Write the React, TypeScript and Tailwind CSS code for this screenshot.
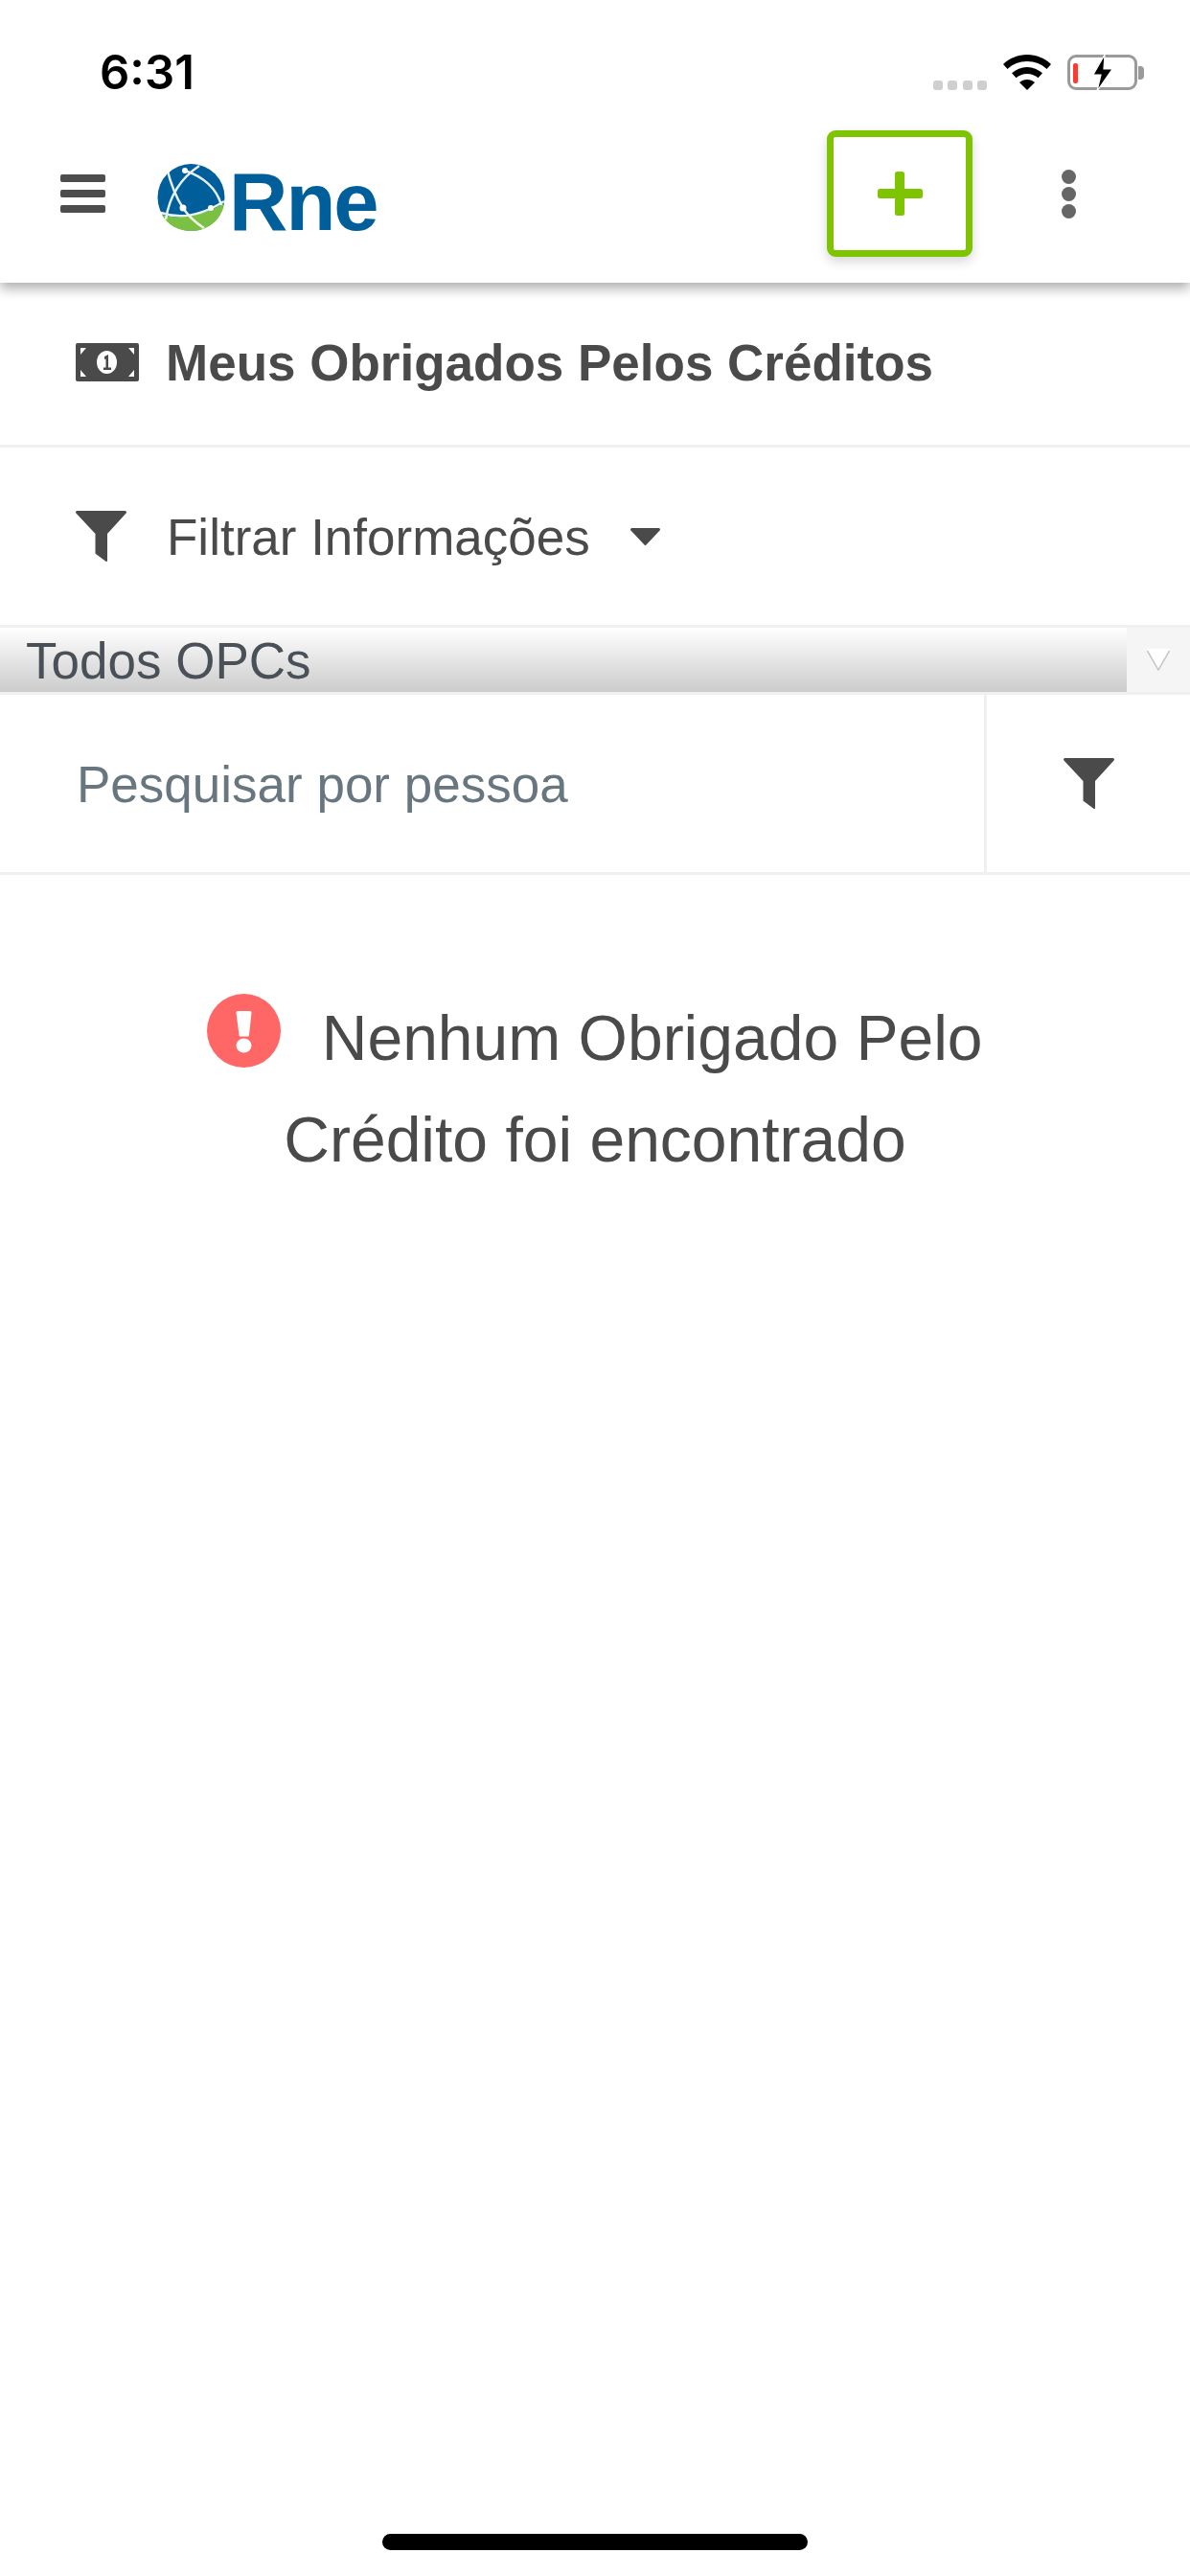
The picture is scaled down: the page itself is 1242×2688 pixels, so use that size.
import React from 'react';

const ink = '#4a4a4a';

const Funnel: React.FC<{ className: string }> = ({ className }) => (
    <svg viewBox="0 0 53 53" className={className} fill={ink}>
        <path d="M1.500 0h50a1.500 1.500 0 0 1 1.100 2.500L33 24v28a1 1 0 0 1-1.600.8L21 45a1 1 0 0 1-.5-.9V24L.4 2.500A1.500 1.500 0 0 1 1.500 0z" />
    </svg>
);

const MoneyIcon = () => (
    <svg viewBox="0 0 66 40" className="w-[66px] h-[40px]">
        <rect width="66" height="40" rx="2" fill={ink} />
        <ellipse cx="32.500" cy="20" rx="10.500" ry="12" fill="#fff" />
        <path d="M30 14l4-2v13.500h3v2.500h-8v-2.500h2.500v-9l-1.500 .5z" fill={ink} />
        <path d="M5 5h6l-6 7zM61 5h-6l6 7zM5 35h6l-6-7zM61 35h-6l6-7z" fill="#fff" />
    </svg>
);

const RneLogo = () => (
    <div className="flex items-start w-[230px] h-[70px] mt-[8px] ml-[54px]">
        <svg viewBox="0 0 71 70" className="w-[71px] h-[70px] shrink-0">
            <circle cx="35.500" cy="35" r="35" fill="#005f9a" />
            <path d="M5 53c9 3 18 3 29 1 12-2 24-6 36-13-2 16-16 29-34 29C22 70 11 64 5 53z" fill="#7ac143" />
            <g fill="none" stroke="#fff" strokeWidth="2.500" opacity="0.9">
                <path d="M10 4c4 16 9 30 17 42 6 9 14 16 22 21M44 2C26 14 13 32 9 58M29 7c18 6 33 18 38 36M4 51c20 7 42 3 66-12" />
            </g>
            <circle cx="27" cy="46" r="3.500" fill="#fff" />
            <circle cx="56" cy="46" r="3" fill="#fff" />
            <circle cx="29" cy="7" r="3" fill="#fff" />
        </svg>
        <span className="ml-[4px] mt-[5px] text-[85px] leading-[70px] font-bold tracking-[-2px] text-[#005f9a] font-['Liberation_Sans',sans-serif]">Rne</span>
    </div>
);

const StatusBar = () => (
    <div className="h-[136px] flex items-start pl-[104px] pr-[48px] pt-[57px]">
        <span className="text-[49px] leading-[37px] font-semibold text-black font-['Inter',sans-serif]">6:31</span>
        <div className="ml-auto flex items-start">
            <div className="flex gap-[5.500px] mt-[27px] mr-[17px]">
                {[0, 1, 2, 3].map(i => (
                    <span key={i} className="w-[10px] h-[10px] rounded-[3px] bg-[#cfcfcf]"></span>
                ))}
            </div>
            <svg viewBox="0 0 50 37" className="w-[50px] h-[37px] mr-[17px]" fill="#000">
                <path d="M25 0c9.500 0 18.500 3.700 25 10l-4.500 5C40 9.800 33 7 25 7S10 9.800 4.500 15L0 10C6.500 3.700 15.500 0 25 0z" />
                <path d="M25 13c6 0 11.500 2.300 16 6.300l-4.500 5C33.500 21.600 29.500 20 25 20s-8.500 1.600-11.500 4.300l-4.500-5C13.500 15.300 19 13 25 13z" />
                <path d="M25 26c3 0 5.700 1 8 2.900L25 37l-8-8.100C19.300 27 22 26 25 26z" />
            </svg>
            <div className="relative w-[80px] h-[37px]">
                <div className="absolute left-0 top-0 w-[73px] h-[37px] rounded-[9px] border-[3px] border-[#9a9a9a]"></div>
                <span className="absolute left-[6px] top-[9px] w-[5px] h-[21px] rounded-[2px] bg-[#ff3b30]"></span>
                <span className="absolute left-[74px] top-[12px] w-[6px] h-[14px] rounded-r-[4px] bg-[#9a9a9a]"></span>
                <svg viewBox="0 0 24 40" className="absolute left-[25px] top-[-1px] w-[24px] h-[40px]">
                    <path d="M14 1L2 22h8L6 39l16-23h-9z" fill="#000" stroke="#fff" strokeWidth="1.200" />
                </svg>
            </div>
        </div>
    </div>
);

const NavBar = () => (
    <div className="h-[159px] flex items-center pl-[63px] pb-[27px]">
        <div className="flex flex-col gap-[8px] w-[47px]">
            <span className="h-[8px] rounded-[2px] bg-[#4d4d4d]"></span>
            <span className="h-[8px] rounded-[2px] bg-[#4d4d4d]"></span>
            <span className="h-[8px] rounded-[2px] bg-[#4d4d4d]"></span>
        </div>
        <RneLogo />
        <button className="ml-[469px] w-[152px] h-[132px] rounded-[9px] border-[7px] border-[#7fc400] bg-white flex items-center justify-center shadow-[0_5px_12px_rgba(0,0,0,0.16)]">
            <svg viewBox="0 0 47 46" className="w-[47px] h-[46px]" fill="#7fc400">
                <rect x="18" width="10" height="46" rx="2.500" />
                <rect y="18" width="47" height="10" rx="2.500" />
            </svg>
        </button>
        <div className="ml-[93px] flex flex-col gap-[3px]">
            <span className="w-[15px] h-[15px] rounded-full bg-[#666666]"></span>
            <span className="w-[15px] h-[15px] rounded-full bg-[#666666]"></span>
            <span className="w-[15px] h-[15px] rounded-full bg-[#666666]"></span>
        </div>
    </div>
);

export default function App() {
    return (
        <div className="w-[1242px] h-[2688px] flex flex-col bg-white text-[#4a4a4a] font-['Liberation_Sans',sans-serif]">
            <header className="relative z-10 bg-white shadow-[0_6px_12px_rgba(0,0,0,0.32)]">
                <StatusBar />
                <NavBar />
            </header>

            <div className="h-[172px] flex items-center pl-[79px] pb-[3px] border-b-[3px] border-[#f0f0f0]">
                <MoneyIcon />
                <h1 className="ml-[28px] mt-[2px] text-[53px] font-bold">Meus Obrigados Pelos Créditos</h1>
            </div>

            <div className="h-[185px] flex items-center pl-[79px]">
                <Funnel className="w-[53px] h-[53px]" />
                <span className="ml-[42px] mt-[2px] text-[53px]">Filtrar Informações</span>
                <svg viewBox="0 0 31 18" className="ml-[42px] w-[31px] h-[18px]" fill={ink}>
                    <path d="M1.500 0h28a1.500 1.500 0 0 1 1.100 2.500L16.500 17.500a1.300 1.300 0 0 1-2 0L.4 2.500A1.500 1.500 0 0 1 1.500 0z" />
                </svg>
            </div>

            <div className="h-[73px] flex border-y-[3px] border-[#f0f0f0] bg-[#f5f5f5]">
                <div className="w-[1176px] flex items-center pl-[27px] pt-[2px] bg-gradient-to-b from-white to-[#cccccc] text-[#495057] text-[53px] leading-[65px]">Todos OPCs</div>
                <div className="flex-1 flex items-center justify-center">
                    <svg viewBox="0 0 24 23" className="w-[24px] h-[23px]">
                        <path d="M0 0h24L12 23z" fill="#fff" />
                        <path d="M.5 2L12 22 23.500 2" fill="none" stroke="#c4c4c4" strokeWidth="1.500" />
                    </svg>
                </div>
            </div>

            <div className="h-[188px] flex border-b-[3px] border-[#f0f0f0]">
                <div className="w-[1027px] flex items-center pl-[80px] pt-[2px] text-[53px] text-[#68777f]">Pesquisar por pessoa</div>
                <div className="flex-1 flex items-center justify-center border-l-[3px] border-[#f0f0f0]">
                    <Funnel className="w-[53px] h-[53px]" />
                </div>
            </div>

            <p className="mt-[117px] px-[150px] text-center text-[66px] leading-[106px]">
                <svg viewBox="0 0 77 77" className="inline-block align-[-8px] w-[77px] h-[77px] mr-[24px]">
                    <circle cx="38.500" cy="38.500" r="38.500" fill="#ff6666" />
                    <path d="M32 18h13a1.500 1.500 0 0 1 1.500 1.500L44 43a1.500 1.500 0 0 1-1.500 1.500h-7.500A1.500 1.500 0 0 1 33.500 43L30.500 19.500A1.500 1.500 0 0 1 32 18z" fill="#fff" />
                    <ellipse cx="38.500" cy="54" rx="8" ry="7.500" fill="#fff" />
                </svg>
                {' '}Nenhum Obrigado Pelo Crédito foi encontrado
            </p>

            <div className="mt-auto mb-[27px] mx-auto w-[444px] h-[17px] rounded-full bg-black"></div>
        </div>
    );
}
